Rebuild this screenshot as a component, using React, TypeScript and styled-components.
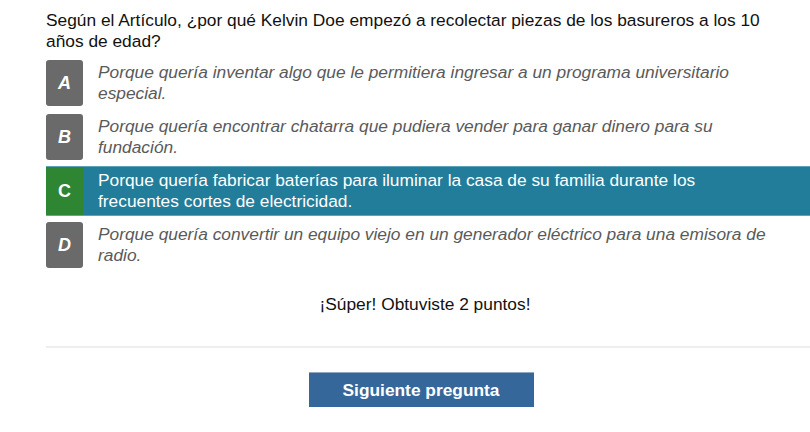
import React from "react";
import styled, { createGlobalStyle } from "styled-components";

const Global = createGlobalStyle`
  html, body { margin: 0; padding: 0; background: #fff; }
  body { font-family: "Liberation Sans", Arial, sans-serif; }
  * { box-sizing: border-box; }
`;

const Page = styled.div`
  width: 810px;
  height: 432px;
  padding: 10px 0 0 46px;
  overflow: hidden;
  position: relative;
`;

const Question = styled.p`
  margin: 0 34px 0 0;
  font-size: 17.33px;
  line-height: 21px;
  color: #111;
`;

const Options = styled.div`
  display: flex;
  flex-direction: column;
  gap: 6px;
  margin-top: 7px;
`;

const Option = styled.div<{ $selected?: boolean }>`
  display: flex;
  align-items: stretch;
  background: ${(p) => (p.$selected ? "#227d9a" : "transparent")};
  border-top: 1px solid ${(p) => (p.$selected ? "#5aa3bb" : "transparent")};
  border-bottom: 1px solid ${(p) => (p.$selected ? "#5aa3bb" : "transparent")};
  margin: ${(p) => (p.$selected ? "-1px 0" : "0")};
  height: ${(p) => (p.$selected ? "50px" : "48px")};
`;

const Letter = styled.div<{ $correct?: boolean }>`
  flex: 0 0 37px;
  display: flex;
  align-items: center;
  justify-content: center;
  background: ${(p) => (p.$correct ? "#2e8532" : "#6a6a6a")};
  border-radius: ${(p) => (p.$correct ? "0" : "3px")};
  color: #fff;
  font-weight: bold;
  font-style: ${(p) => (p.$correct ? "normal" : "italic")};
  font-size: 18px;
`;

const OptionText = styled.div<{ $selected?: boolean }>`
  flex: 1;
  display: flex;
  align-items: center;
  padding: 0 31px 0 15px;
  font-size: 17.33px;
  line-height: 21px;
  color: ${(p) => (p.$selected ? "#fff" : "#5a5a5a")};
  font-style: ${(p) => (p.$selected ? "normal" : "italic")};
`;

const Score = styled.p`
  margin: 25px 0 0 0;
  text-align: center;
  font-size: 17.33px;
  line-height: 21px;
  color: #111;
  padding-right: 6px;
`;

const Divider = styled.hr`
  margin: 31px 0 0 0;
  border: 0;
  height: 2px;
  background: #eeeeee;
`;

const Footer = styled.div`
  display: flex;
  justify-content: center;
  padding: 24px 14px 0 0;
`;

const NextButton = styled.button`
  width: 225px;
  height: 35px;
  border: 0;
  border-top: 1px solid #8ea8c6;
  background: #35679a;
  color: #fff;
  font-family: "Liberation Sans", Arial, sans-serif;
  font-weight: bold;
  font-size: 17.33px;
  padding: 0;
`;

const options = [
  { l: "A", t: "Porque quería inventar algo que le permitiera ingresar a un programa universitario especial." },
  { l: "B", t: "Porque quería encontrar chatarra que pudiera vender para ganar dinero para su fundación." },
  { l: "C", t: "Porque quería fabricar baterías para iluminar la casa de su familia durante los frecuentes cortes de electricidad.", ok: true },
  { l: "D", t: "Porque quería convertir un equipo viejo en un generador eléctrico para una emisora de radio." },
];

export default function App() {
  return (
    <Page>
      <Global />
      <Question>
        Según el Artículo, ¿por qué Kelvin Doe empezó a recolectar piezas de los basureros a los 10 años de edad?
      </Question>
      <Options>
        {options.map((o) => (
          <Option key={o.l} $selected={o.ok}>
            <Letter $correct={o.ok}>{o.l}</Letter>
            <OptionText $selected={o.ok}>{o.t}</OptionText>
          </Option>
        ))}
      </Options>
      <Score>¡Súper! Obtuviste 2 puntos!</Score>
      <Divider />
      <Footer>
        <NextButton>Siguiente pregunta</NextButton>
      </Footer>
    </Page>
  );
}
